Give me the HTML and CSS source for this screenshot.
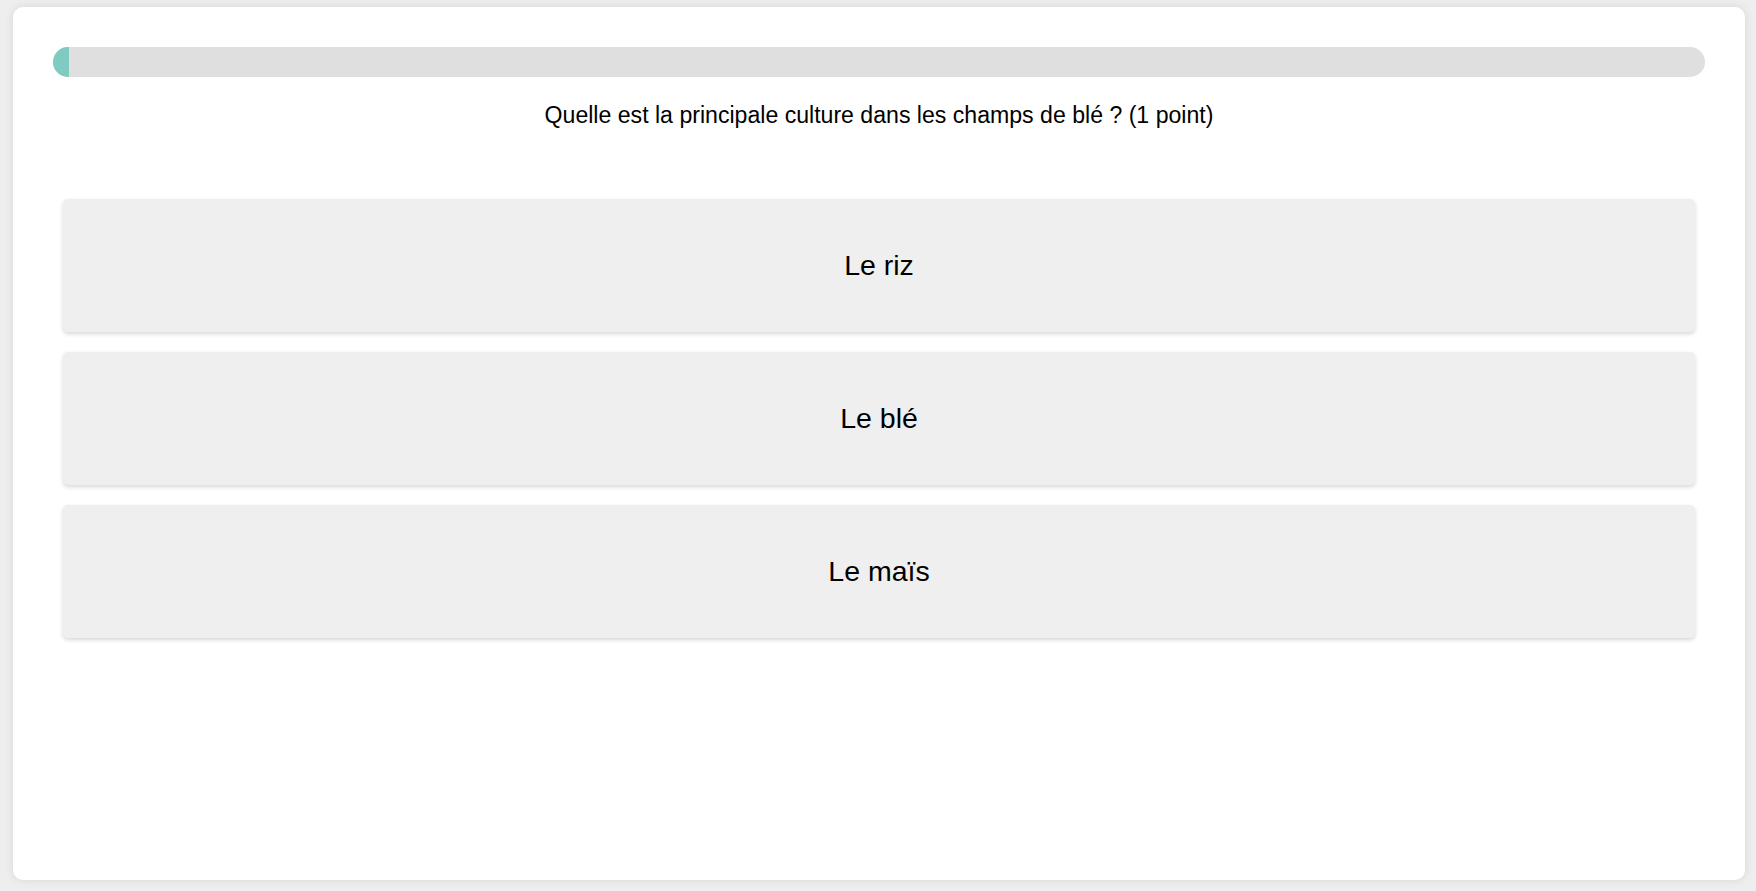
FILE: index.html
```html
<!DOCTYPE html>
<html lang="fr">
<head>
<meta charset="utf-8">
<title>Quiz</title>
<link rel="stylesheet" href="styles.css">
</head>
<body>
<div class="card">
  <div class="progress"><div class="progress-fill" style="width:16px"></div></div>
  <p class="question">Quelle est la principale culture dans les champs de blé ? (1 point)</p>
  <div class="options">
    <div class="option">Le riz</div>
    <div class="option">Le blé</div>
    <div class="option">Le maïs</div>
  </div>
</div>
</body>
</html>
```
FILE: styles.css
```css
html, body {
  margin: 0;
  padding: 0;
  background: #eeeeee;
  font-family: "Liberation Sans", Arial, sans-serif;
  color: #000;
}
body {
  padding: 7px 11px 11px 13px;
}
.card {
  box-sizing: border-box;
  height: 873px;
  background: #ffffff;
  border-radius: 10px;
  box-shadow: 0 0 10px rgba(0, 0, 0, 0.1);
  padding: 40px 40px;
}
.progress {
  height: 30px;
  background: #dfdfdf;
  border-radius: 15px;
  overflow: hidden;
}
.progress-fill {
  height: 100%;
  background: #7fcbc1;
}
.question {
  margin: 25px 0 0;
  text-align: center;
  font-size: 23.1px;
  line-height: 26px;
}
.options {
  margin: 71px 10px 0;
  display: flex;
  flex-direction: column;
  gap: 20px;
}
.option {
  height: 133px;
  display: flex;
  align-items: center;
  justify-content: center;
  background: #efefef;
  border-radius: 5px;
  box-shadow: 0 2px 4px rgba(0, 0, 0, 0.16);
  font-size: 28.5px;
}
```
